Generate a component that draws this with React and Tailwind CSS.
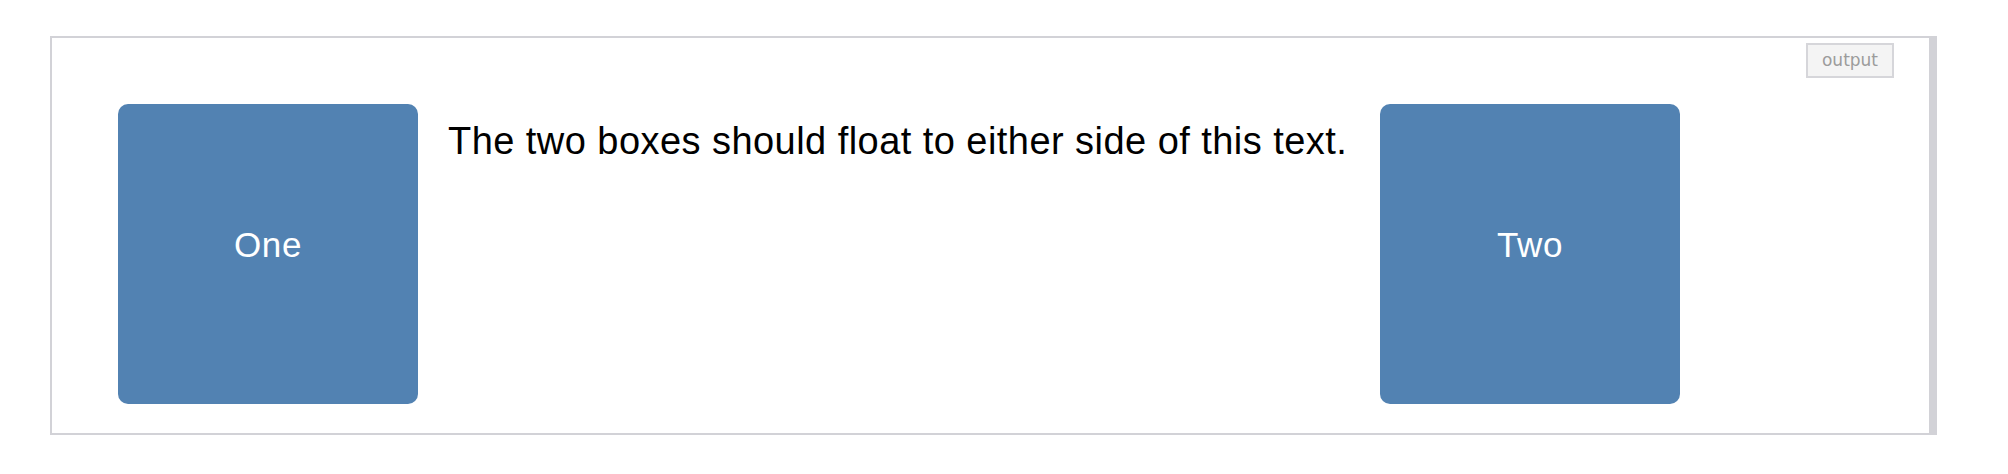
import React from "react";

function Box({ label }) {
  return (
    <div className="flex h-[300px] w-[300px] shrink-0 items-center justify-center rounded-[10px] bg-[#5282b2] pb-[18px] text-[35px] tracking-[0.6px] text-white">
      {label}
    </div>
  );
}

export default function App() {
  return (
    <div className="bg-white pl-[50px] pt-[36px] font-['Liberation_Sans',Arial,sans-serif]">
      <div className="relative flex w-[1887px] items-start border-2 border-r-8 border-[#d2d2d7] pb-[29px] pl-[66px] pr-[249px] pt-[66px]">
        {/* result label */}
        <span className="absolute right-[35px] top-[5px] flex h-[35px] w-[88px] items-center justify-center border-2 border-[#d6d6da] bg-[#f4f4f4] font-['DejaVu_Sans',sans-serif] text-[17px] text-[#9c9c9c]">
          output
        </span>

        <Box label="One" />
        <p className="ml-[30px] mt-[15px] flex-1 text-[38px] leading-[44px] tracking-[0.45px] text-black">
          The two boxes should float to either side of this text.
        </p>
        <Box label="Two" />
      </div>
    </div>
  );
}
